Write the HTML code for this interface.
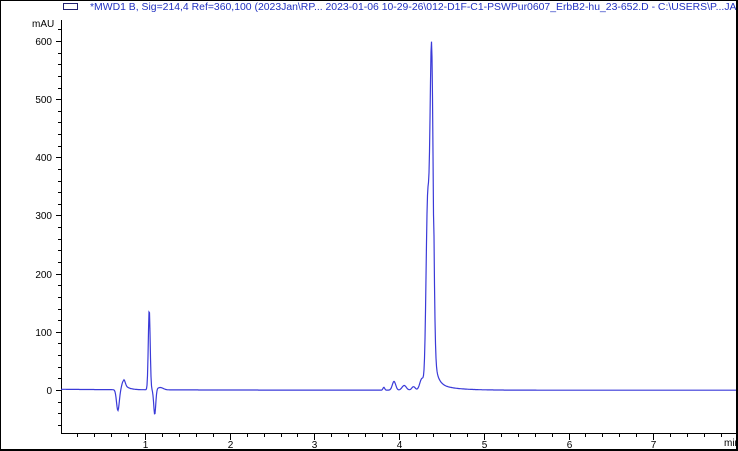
<!DOCTYPE html>
<html><head><meta charset="utf-8"><style>
html,body{margin:0;padding:0;background:#fff;}
body{width:738px;height:451px;overflow:hidden;position:relative;font-family:"Liberation Sans",Arial,sans-serif;}
svg{position:absolute;left:0;top:0;}
</style></head><body>
<svg id="s" width="738" height="451" viewBox="0 0 738 451" xmlns="http://www.w3.org/2000/svg">
<rect x="0.5" y="0.5" width="736" height="449" fill="#fff" stroke="#000" stroke-width="1"/>
<text x="90" y="10" font-size="10" fill="#2030c0" textLength="654" lengthAdjust="spacingAndGlyphs" font-family="Liberation Sans, Arial, sans-serif">*MWD1 B, Sig=214,4 Ref=360,100 (2023Jan\RP... 2023-01-06 10-29-26\012-D1F-C1-PSWPur0607_ErbB2-hu_23-652.D - C:\USERS\P...JAN</text>
<rect x="736" y="0" width="2" height="451" fill="#000"/>
<rect x="0" y="449" width="738" height="2" fill="#000"/>
<rect x="63.5" y="3.5" width="14" height="6" fill="none" stroke="#202070" stroke-width="1"/>
<line x1="61.5" y1="20" x2="61.5" y2="433.5" stroke="#000"/>
<line x1="61" y1="433.5" x2="736" y2="433.5" stroke="#000"/>
<text x="32" y="27" font-size="10" fill="#000">mAU</text>
<g id="ax" font-size="10" fill="#000"></g>
<path id="p" fill="none" stroke="#3a3ad8" stroke-width="1.2"/>
</svg>
<script>
var ns="http://www.w3.org/2000/svg",ax=document.getElementById('ax');
function X(t){return 60.3+t*84.7;}function Y(v){return 390-v*0.5817;}
function ln(a,b,c,d){var l=document.createElementNS(ns,'line');l.setAttribute('x1',a);l.setAttribute('y1',b);l.setAttribute('x2',c);l.setAttribute('y2',d);l.setAttribute('stroke','#000');ax.appendChild(l);}
function tx(x,y,s,a){var t=document.createElementNS(ns,'text');t.setAttribute('x',x);t.setAttribute('y',y);t.setAttribute('text-anchor',a);t.textContent=s;ax.appendChild(t);}
for(var v=-80;v<=620;v+=20){var y=Math.round(Y(v))+0.5;if(y<20||y>433)continue;if(v%100==0){ln(56,y,61,y);tx(52,y+3.5,''+v,'end');}else ln(58,y,61,y);}
for(var t=0.2;t<8;t+=0.2){var tt=Math.round(t*10)/10;var x=Math.round(X(tt))+0.5;if(x>735)continue;if(Math.abs(tt-Math.round(tt))<0.01){ln(x,433,x,440);tx(x,448,''+Math.round(tt),'middle');}else ln(x,433,x,437);}
tx(724,446,'min','start');
function g(t,c,a,s){return a*Math.exp(-(t-c)*(t-c)/(2*s*s));}
var d='';
for(var px=61;px<=736;px+=0.5){var t=(px-60.3)/84.7;var v=1.5*Math.exp(-t/1.2)-0.3;
v+=g(t,0.68,-36,0.016)+g(t,0.745,15,0.018)+(t>0.745?12*Math.exp(-(t-0.745)/0.05)*(1-Math.exp(-(t-0.745)/0.02)):0);
v+=g(t,1.05,138,0.011)+g(t,1.115,-43,0.012)+g(t,1.18,4,0.035);
v+=g(t,3.82,5,0.01)+g(t,3.94,15,0.02)+g(t,4.06,8,0.025)+g(t,4.17,6,0.02)+g(t,4.27,20,0.025);
v+=g(t,4.383,590,0.02)+g(t,4.335,300,0.018);
if(t>4.41)v+=50*Math.exp(-(t-4.41)/0.04)+12*Math.exp(-(t-4.41)/0.2);
d+=(d?'L':'M')+px.toFixed(1)+' '+Y(v).toFixed(1);}
document.getElementById('p').setAttribute('d',d);
</script>
</body></html>
